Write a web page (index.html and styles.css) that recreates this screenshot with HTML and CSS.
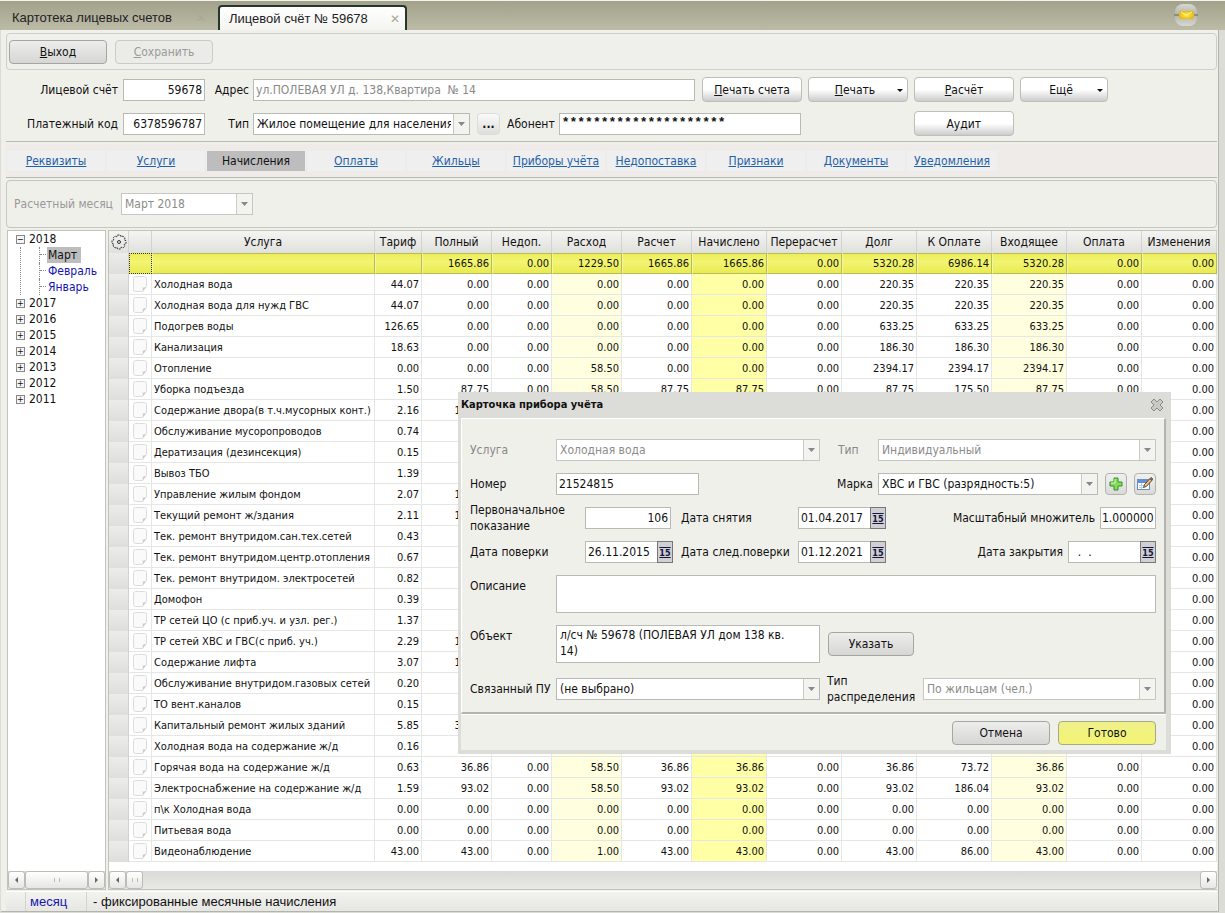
FILE: index.html
```html
<!DOCTYPE html>
<html lang="ru">
<head>
    <meta charset="UTF-8">
    <meta name="viewport" content="width=device-width, initial-scale=1.0">
    <title>Лицевой счёт № 59678</title>
    <link rel="stylesheet" href="styles.css">
</head>
<body>
    <header class="tabbar">
        <a href="#" class="tab">Картотека лицевых счетов <span class="tab-close">✕</span></a>
        <a href="#" class="tab tab-active">Лицевой счёт № 59678 <span class="tab-close">✕</span></a>
        <button type="button" class="mail" aria-label="Сообщения">
            <svg width="26" height="22" viewBox="0 0 26 22">
                <defs>
                    <linearGradient id="ball" x1="0" y1="0" x2="0" y2="1">
                        <stop offset="0" stop-color="#d6d6d2"/>
                        <stop offset="0.5" stop-color="#b4b4ae"/>
                        <stop offset="1" stop-color="#d8d8d4"/>
                    </linearGradient>
                    <radialGradient id="letter">
                        <stop offset="0" stop-color="#fff04a"/>
                        <stop offset="1" stop-color="#e8b818"/>
                    </radialGradient>
                </defs>
                <rect x="2" y="0" width="22" height="22" rx="8" fill="url(#ball)"/>
                <path d="M1 11h24" stroke="#8d8d80" stroke-width="2"/>
                <rect x="6" y="7" width="15" height="8" rx="2" fill="url(#letter)"/>
                <path d="M8 8l5 3 6-3" fill="none" stroke="#fff68c"/>
            </svg>
        </button>
    </header>

    <div class="window">
        <div class="toolbar">
            <button type="button" class="btn btn-gray"><u>В</u>ыход</button>
            <button type="button" class="btn btn-gray" disabled><u>С</u>охранить</button>
        </div>

        <form class="account">
            <div class="account-row">
                <label class="w-first" for="account">Лицевой счёт</label>
                <input class="field w-code num" id="account" type="text" value="59678">
                <label class="w-second" for="address">Адрес</label>
                <input class="field w-address muted" id="address" type="text" value="ул.ПОЛЕВАЯ УЛ д. 138,Квартира  № 14" readonly>
                <div class="actions">
                    <button type="button" class="btn"><u>П</u>ечать счета</button>
                    <button type="button" class="btn btn-menu"><u>П</u>ечать</button>
                    <button type="button" class="btn"><u>Р</u>асчёт</button>
                    <button type="button" class="btn btn-menu btn-more">Ещё</button>
                </div>
            </div>
            <div class="account-row">
                <label class="w-first" for="paycode">Платежный код</label>
                <input class="field w-code num" id="paycode" type="text" value="6378596787">
                <label class="w-second" for="kind">Тип</label>
                <select class="field w-kind" id="kind"><option>Жилое помещение для населения</option></select>
                <button type="button" class="btn btn-dots">...</button>
                <label for="owner">Абонент</label>
                <input class="field w-owner stars" id="owner" type="text" value="*********************">
                <button type="button" class="btn btn-audit">Аудит</button>
            </div>
        </form>

        <nav class="sections">
            <a href="#">Реквизиты</a>
            <a href="#">Услуги</a>
            <a href="#" class="current">Начисления</a>
            <a href="#">Оплаты</a>
            <a href="#">Жильцы</a>
            <a href="#">Приборы учёта</a>
            <a href="#">Недопоставка</a>
            <a href="#">Признаки</a>
            <a href="#">Документы</a>
            <a href="#">Уведомления</a>
        </nav>

        <div class="filter">
            <label for="month">Расчетный месяц</label>
            <select class="field w-month" id="month" disabled><option>Март 2018</option></select>
        </div>

        <main class="content">
            <aside class="tree-panel">
                <ul class="tree">
                    <li><button type="button" class="toggle">−</button>2018
                        <ul>
                            <li><a href="#" class="selected">Март</a></li>
                            <li><a href="#">Февраль</a></li>
                            <li><a href="#">Январь</a></li>
                        </ul>
                    </li>
                    <li><button type="button" class="toggle">+</button>2017</li>
                    <li><button type="button" class="toggle">+</button>2016</li>
                    <li><button type="button" class="toggle">+</button>2015</li>
                    <li><button type="button" class="toggle">+</button>2014</li>
                    <li><button type="button" class="toggle">+</button>2013</li>
                    <li><button type="button" class="toggle">+</button>2012</li>
                    <li><button type="button" class="toggle">+</button>2011</li>
                </ul>
                <div class="scroll">
                    <button type="button" class="scroll-btn left" aria-label="Влево"></button>
                    <span class="thumb thumb-wide"></span>
                    <button type="button" class="scroll-btn right" aria-label="Вправо"></button>
                </div>
            </aside>

            <section class="grid-panel">
                <table class="grid">
                    <colgroup>
                        <col class="c-mark"><col class="c-note"><col><col class="c-rate">
                        <col class="c-mid"><col class="c-small"><col class="c-mid"><col class="c-mid">
                        <col class="c-sum"><col class="c-sum"><col class="c-sum"><col class="c-sum">
                        <col class="c-sum"><col class="c-sum"><col class="c-sum">
                    </colgroup>
                    <thead>
                        <tr>
                            <th>
                                <svg class="gear" width="16" height="16" viewBox="0 0 16 16" fill="none" stroke="#333">
                                    <path stroke-dasharray="2 1" d="M6.5 1h3l.6 1.8 1.9-.7 2 2-.8 1.8 1.8.7v2.9l-1.8.7.8 1.8-2 2-1.9-.8-.6 1.8h-3l-.6-1.8-1.9.8-2-2 .8-1.8L1 9.500V6.600l1.800-.7L2 4.100l2-2 1.900.7z"/>
                                    <circle cx="8" cy="8" r="1.500"/>
                                </svg>
                            </th>
                            <th></th>
                            <th>Услуга</th>
                            <th>Тариф</th>
                            <th>Полный</th>
                            <th>Недоп.</th>
                            <th>Расход</th>
                            <th>Расчет</th>
                            <th>Начислено</th>
                            <th>Перерасчет</th>
                            <th>Долг</th>
                            <th>К Оплате</th>
                            <th>Входящее</th>
                            <th>Оплата</th>
                            <th>Изменения</th>
                        </tr>
                    </thead>
                    <tbody id="rows">
                        <tr class="total">
                            <td class="mark"></td><td class="focus"></td><td></td><td></td>
                            <td>1665.86</td><td>0.00</td><td>1229.50</td><td>1665.86</td><td>1665.86</td><td>0.00</td>
                            <td>5320.28</td><td>6986.14</td><td>5320.28</td><td>0.00</td><td>0.00</td>
                        </tr>
                    </tbody>
                </table>
                <div class="scroll">
                    <button type="button" class="scroll-btn left" aria-label="Влево"></button>
                    <span class="thumb"></span>
                    <button type="button" class="scroll-btn right push" aria-label="Вправо"></button>
                </div>
            </section>
        </main>

        <footer class="status">
            <span class="status-month">месяц</span>
            <span>- фиксированные месячные начисления</span>
        </footer>
    </div>

    <form class="dialog" role="dialog" aria-labelledby="dialogTitle">
        <div class="dialog-head">
            <h1 id="dialogTitle">Карточка прибора учёта</h1>
            <button type="button" class="dialog-close" aria-label="Закрыть">
                <svg width="14" height="14" viewBox="0 0 14 14">
                    <path d="M4 1L7 4l3-3 3 3-3 3 3 3-3 3-3-3-3 3-3-3 3-3-3-3z" fill="#c9c9c6" stroke="#8a8a88"/>
                </svg>
            </button>
        </div>
        <div class="dialog-body">
            <div class="line">
                <label class="d-label muted" for="service">Услуга</label>
                <select class="field d-wide" id="service" disabled><option>Холодная вода</option></select>
                <label class="d-type muted" for="type">Тип</label>
                <select class="field grow" id="type" disabled><option>Индивидуальный</option></select>
            </div>
            <div class="line">
                <label class="d-label" for="number">Номер</label>
                <input class="field d-number" id="number" type="text" value="21524815">
                <label class="push" for="brand">Марка</label>
                <select class="field d-brand" id="brand"><option>ХВС и ГВС (разрядность:5)</option></select>
                <button type="button" class="icon-btn" aria-label="Добавить">
                    <svg width="14" height="14" viewBox="0 0 14 14">
                        <path d="M5 1h4v4h4v4H9v4H5V9H1V5h4z" fill="#7fe05a" stroke="#3c8c2a"/>
                        <path d="M6 2v4H2" fill="none" stroke="#d2f8bc"/>
                    </svg>
                </button>
                <button type="button" class="icon-btn" aria-label="Изменить">
                    <svg width="16" height="16" viewBox="0 0 16 16">
                        <rect x="0.500" y="3.500" width="12" height="10" fill="#fff" stroke="#6d8fc0"/>
                        <path d="M1 4h11v3H1z" fill="#5f8fd8"/>
                        <path d="M2 9.500h6M2 11.500h4M4.500 7v6" stroke="#bfd0e8"/>
                        <path d="M6.500 11.500l1-3L13 2.500l2 1.800-5.500 6z" fill="#f0c070" stroke="#54453a"/>
                        <path d="M13 2.500l1-1 2 1.800-1 1z" fill="#d07a7a" stroke="#54453a"/>
                    </svg>
                </button>
            </div>
            <div class="line">
                <label class="d-label d-label-long" for="initial">Первоначальное показание</label>
                <input class="field d-initial num" id="initial" type="text" value="106">
                <label class="d-date-label" for="removed">Дата снятия</label>
                <span class="date"><input class="field" id="removed" type="text" value="01.04.2017"><button type="button" class="cal">15</button></span>
                <label class="push" for="scale">Масштабный множитель</label>
                <input class="field d-scale" id="scale" type="text" value="1.000000">
            </div>
            <div class="line">
                <label class="d-label d-label-long" for="checked">Дата поверки</label>
                <span class="date"><input class="field" id="checked" type="text" value="26.11.2015"><button type="button" class="cal">15</button></span>
                <label class="d-date-label" for="next">Дата след.поверки</label>
                <span class="date"><input class="field" id="next" type="text" value="01.12.2021"><button type="button" class="cal">15</button></span>
                <label class="push" for="closed">Дата закрытия</label>
                <span class="date"><input class="field" id="closed" type="text" value="  .  ."><button type="button" class="cal">15</button></span>
            </div>
            <div class="line line-top">
                <label class="d-label" for="about">Описание</label>
                <textarea class="field grow" id="about"></textarea>
            </div>
            <div class="line line-top">
                <label class="d-label" for="object">Объект</label>
                <textarea class="field d-wide" id="object">л/сч № 59678 (ПОЛЕВАЯ УЛ дом 138 кв. 14)</textarea>
                <button type="button" class="btn btn-gray btn-set">Указать</button>
            </div>
            <div class="line line-last">
                <label class="d-label" for="linked">Связанный ПУ</label>
                <select class="field d-wide" id="linked"><option>(не выбрано)</option></select>
                <label class="d-split" for="split">Тип распределения</label>
                <select class="field grow" id="split" disabled><option>По жильцам (чел.)</option></select>
            </div>
        </div>
        <div class="dialog-foot">
            <button type="button" class="btn btn-gray">Отмена</button>
            <button type="submit" class="btn btn-ok">Готово</button>
        </div>
    </form>

    <script src="script.js"></script>
</body>
</html>
```
FILE: styles.css
```css
* {
    box-sizing: border-box;
}
body {
    margin: 0;
    min-height: 100vh;
    display: flex;
    flex-direction: column;
    position: relative;
    background-color: #dcdcd7;
    color: #111;
    font-family: "DejaVu Sans Condensed", "DejaVu Sans", sans-serif;
    font-size: 12px;
    line-height: 16px;
}
input, select, textarea, button {
    font: inherit;
    color: inherit;
    margin: 0;
}
.push {
    margin-left: auto;
}
.grow {
    flex: 1;
    min-width: 0;
}
.muted {
    color: #888;
}

/* tabs */
.tabbar {
    display: flex;
    align-items: flex-end;
    height: 30px;
    border-top: 1px solid #f4f4ee;
    background: linear-gradient(#a2a28b, #bcbba7);
    font-family: "Liberation Sans", Arial, sans-serif;
    font-size: 13px;
}
.tab {
    display: flex;
    justify-content: space-between;
    align-items: center;
    width: 218px;
    height: 25px;
    padding: 0 12px;
    color: #222;
    text-decoration: none;
}
.tab-close {
    color: #aaa998;
    font-size: 12px;
}
.tab-active {
    width: 189px;
    padding: 0 5px 0 9px;
    border: 2px solid #26362c;
    border-bottom: none;
    border-radius: 4px 4px 0 0;
    background: linear-gradient(#fff, #f4f4f0);
}
.mail {
    margin: 0 26px 4px auto;
    padding: 0;
    height: 22px;
    border: none;
    background: none;
}

.window {
    flex: 1;
    display: flex;
    flex-direction: column;
    margin: 0 6px 1px 1px;
    padding: 3px 1px 0 5px;
    border-right: 1px solid #b4b4ae;
    border-bottom: 1px solid #b4b4ae;
    background-color: #f0f0eb;
}

/* buttons */
.btn {
    width: 100px;
    height: 25px;
    padding: 0;
    border: 1px solid #bdbdb9;
    border-radius: 4px;
    background: linear-gradient(#fff 50%, #ccc);
}
.btn-gray {
    width: 98px;
    height: 24px;
    border-color: #a5a5a2;
    background: linear-gradient(#ededeb, #d6d6d5);
}
.btn:disabled {
    color: #9a9a98;
    border-color: #cacac6;
    background: #ebebe8;
}
.btn-menu {
    padding-left: 4px;
}
.btn-menu::after {
    content: "";
    float: right;
    margin: 7px 4px 0 0;
    border: 3px solid transparent;
    border-top-color: #111;
}
.btn-more {
    width: 88px;
}
.btn-dots {
    width: 23px;
    height: 22px;
    margin: 0 7px;
    border-color: #dcdcd9;
    background: linear-gradient(#fafafa, #dededd);
    font-weight: bold;
}
.btn-ok {
    width: 98px;
    height: 24px;
    border-color: #a8a98a;
    background: linear-gradient(#eef08a, #f3f472);
}

/* text boxes and lists */
.field {
    height: 22px;
    padding: 0 2px;
    border: 1px solid #b9bab4;
    border-radius: 0;
    background-color: #fff;
    outline: none;
}
.num {
    text-align: right;
}
select.field {
    appearance: none;
    padding: 0 18px 0 3px;
    background: #fff url("data:image/svg+xml,%3Csvg xmlns='http://www.w3.org/2000/svg' width='16' height='20'%3E%3Cpath d='M0 0h16v20H0z' fill='%23f3f3f0'/%3E%3Cpath d='M.5 0v20' stroke='%23cbcbc6'/%3E%3Cpath d='M5 8h7l-3.500 4z' fill='%23888'/%3E%3C/svg%3E") right top no-repeat;
}
.field:disabled {
    color: #8c8c8a;
    border-color: #c6c6c2;
    opacity: 1;
}
textarea.field {
    height: 38px;
    padding: 1px 16px 1px 3px;
    resize: none;
    overflow: hidden;
}

.toolbar {
    display: flex;
    gap: 8px;
    height: 37px;
    padding: 6px 2px;
    border: 1px solid #cfcfca;
    border-radius: 4px;
    background-color: #efefec;
}

/* account header */
.account {
    display: flex;
    flex-direction: column;
    gap: 9px;
    padding: 7px 0 5px;
    border-bottom: 1px solid #b9b9b4;
}
.account-row {
    display: flex;
    align-items: center;
    height: 25px;
}
.w-first {
    width: 112px;
    text-align: right;
}
.w-code {
    width: 82px;
    margin-left: 5px;
}
.w-second {
    width: 44px;
    margin-right: 4px;
    text-align: right;
}
.w-address {
    width: 442px;
    white-space: pre;
}
.w-kind {
    width: 217px;
}
.w-owner {
    width: 242px;
    margin-left: 4px;
}
.stars {
    padding-bottom: 2px;
    font-family: "Liberation Mono", monospace;
    font-size: 13px;
    font-weight: bold;
}
.actions {
    display: flex;
    gap: 6px;
    margin-left: 7px;
}
.btn-audit {
    margin-left: 113px;
}

.sections {
    display: flex;
    gap: 2px;
    margin-top: 2px;
    padding: 7px 1px 6px;
    border-bottom: 1px solid #b9b9b4;
    background-color: #eeebe8;
}
.sections a {
    width: 98px;
    padding: 2px 0;
    background-color: #efeff0;
    color: #1f62a8;
    text-align: center;
    white-space: nowrap;
}
.sections a:last-child {
    width: 90px;
}
.sections a.current {
    background-color: #bdbdbe;
    color: #111;
    text-decoration: none;
}

.filter {
    display: flex;
    align-items: center;
    gap: 8px;
    height: 48px;
    margin: 2px 0;
    padding: 0 7px;
    border: 1px solid #c6c6c1;
    border-radius: 4px;
    color: #999;
}
.w-month {
    width: 132px;
}

/* months tree */
.content {
    flex: 1;
    display: flex;
    gap: 2px;
}
.tree-panel {
    display: flex;
    flex-direction: column;
    width: 99px;
    margin-left: 1px;
    border: 1px solid #c3c3be;
    background-color: #fff;
}
.tree {
    flex: 1;
}
.tree, .tree ul {
    margin: 0;
    padding: 0;
    list-style: none;
}
.tree li {
    padding-left: 8px;
}
.tree ul {
    margin-left: 4px;
    padding-left: 18px;
    border-left: 1px dotted #888;
}
.tree ul li {
    padding-left: 0;
    border-left: 1px dotted #888;
}
.tree ul li::before {
    content: "";
    display: inline-block;
    width: 6px;
    margin-right: 1px;
    border-top: 1px dotted #888;
    vertical-align: 4px;
}
.tree a {
    display: inline-block;
    color: #1515b0;
    padding: 0 1px;
    text-decoration: none;
}
.tree a.selected {
    padding: 0 4px 0 1px;
    background-color: #bdbdbd;
    color: #111;
}
.toggle {
    width: 9px;
    height: 9px;
    margin-right: 4px;
    padding: 0;
    border: 1px solid #888;
    background-color: #f4f4f4;
    font-size: 9px;
    line-height: 7px;
    vertical-align: 1px;
}

.scroll {
    display: flex;
    height: 18px;
    background: linear-gradient(#dadad8, #e8e8e4);
}
.scroll-btn, .thumb {
    display: flex;
    justify-content: center;
    align-items: center;
    width: 17px;
    padding: 0;
    border: 1px solid #bcbcb8;
    border-radius: 3px;
    background: linear-gradient(#fff, #e6e6e4);
}
.scroll-btn::before {
    content: "";
    border: 3px solid transparent;
}
.scroll-btn.left::before {
    margin-right: 3px;
    border-right-color: #666;
}
.scroll-btn.right::before {
    margin-left: 3px;
    border-left-color: #666;
}
.thumb::before {
    content: "";
    width: 4px;
    height: 4px;
    border: 1px solid #bbb;
    border-width: 0 1px;
}
.thumb-wide {
    flex: 1;
}

/* charges grid */
.grid-panel {
    flex: 1;
    min-width: 0;
    display: flex;
    flex-direction: column;
    justify-content: space-between;
    border: 1px solid #c3c3be;
    border-right: none;
    background-color: #fff;
}
.grid {
    width: 100%;
    table-layout: fixed;
    border-collapse: separate;
    border-spacing: 0;
    font-size: 11px;
}
.c-mark { width: 20px; }
.c-note { width: 23px; }
.c-rate { width: 47px; }
.c-small { width: 60px; }
.c-mid { width: 70px; }
.c-sum { width: 75px; }
.grid th {
    height: 22px;
    padding: 0;
    border-right: 1px solid #d2d2d0;
    background: linear-gradient(#f4f4f2, #e0e0dd);
    font-size: 12px;
    font-weight: normal;
    white-space: nowrap;
}
.grid td {
    height: 21px;
    padding: 1px 2px 0;
    border-right: 1px solid #e6e6e4;
    border-bottom: 1px solid #e6e6e4;
    text-align: right;
    white-space: nowrap;
}
.grid td:nth-child(3) {
    text-align: left;
}
.grid td.note {
    padding: 0 4px;
}
.grid td.note svg, .gear {
    display: block;
    margin: 0 auto;
}
.grid td:nth-child(7), .grid td:nth-child(13) {
    background-color: #ffffdf;
}
.grid td:nth-child(9) {
    background-color: #ffffa5;
}
.grid .total td {
    border: 1px solid #b9ba5c;
    border-left-color: #f4f5a0;
    background: linear-gradient(#ecee55, #f2f474 40%, #e9eb50);
}
.grid td.mark, .grid .total td.mark {
    border: none;
    border-right: 1px solid #d2d2d0;
    background: linear-gradient(#ececea, #dededc);
}
.grid .total td.focus {
    border: 1px dotted #333;
}

.status {
    display: flex;
    height: 20px;
    margin-top: 1px;
    padding-left: 19px;
    border-top: 1px solid #fff;
    background: linear-gradient(#f2f2ee, #e6e6e2);
    font-family: "Liberation Sans", Arial, sans-serif;
    font-size: 13px;
    line-height: 20px;
}
.status-month {
    width: 62px;
    margin-right: 6px;
    padding-left: 4px;
    border-left: 1px solid #d4d4cf;
    border-right: 1px solid #d4d4cf;
    color: #1515b0;
}

/* meter card */
.dialog {
    position: absolute;
    left: 458px;
    top: 392px;
    width: 713px;
    padding: 0 5px 4px 3px;
    background-color: #dcdcd9;
}
.dialog-head {
    display: flex;
    justify-content: space-between;
    align-items: center;
    height: 26px;
}
.dialog-head h1 {
    margin: 0;
    font-size: 11px;
}
.dialog-close {
    height: 14px;
    padding: 0;
    margin-right: 2px;
    border: none;
    background: none;
}
.dialog-body {
    padding: 20px 8px 12px 8px;
    display: flex;
    flex-direction: column;
    gap: 12px;
    border: 1px solid #fff;
    border-right: 2px solid #b4b4b0;
    border-bottom: 2px solid #b4b4b0;
    background-color: #f0f0eb;
}
.line {
    display: flex;
    align-items: center;
    min-height: 22px;
}
.line label {
    flex-shrink: 0;
}
.line .push {
    margin-right: 5px;
}
.line-top {
    align-items: flex-start;
}
.line-top label {
    padding-top: 3px;
}
.line-last {
    margin-top: 3px;
}
.d-label {
    width: 86px;
    white-space: nowrap;
}
.d-label-long {
    width: 115px;
    margin: -5px 0;
    white-space: normal;
}
.d-wide {
    width: 264px;
}
.d-type {
    width: 58px;
    padding-left: 18px;
}
.d-number {
    width: 143px;
}
.d-brand {
    width: 220px;
}
.d-initial {
    width: 86px;
    margin-right: 2px;
}
.d-date-label {
    width: 125px;
    padding-left: 8px;
}
.d-scale {
    width: 56px;
    padding: 0 1px;
}
.d-split {
    width: 103px;
    margin: -5px 0;
    padding-left: 7px;
}
.date {
    display: flex;
    width: 88px;
}
.date .field {
    width: 72px;
    border-right: none;
    white-space: pre;
}
.cal {
    width: 16px;
    height: 22px;
    padding: 2px 0 0;
    border: 1px solid #777;
    background-color: #d0d0d4;
    color: #14143c;
    font-size: 9px;
    font-weight: bold;
    text-decoration: underline overline;
}
.icon-btn {
    display: flex;
    align-items: center;
    justify-content: center;
    width: 22px;
    height: 22px;
    margin-left: 7px;
    padding: 0;
    border: 1px solid #b2b2b0;
    border-radius: 4px;
    background: linear-gradient(#f0f0ee, #dadad8);
}
.btn-set {
    align-self: center;
    width: 86px;
    margin-left: 8px;
}
.dialog-foot {
    display: flex;
    justify-content: flex-end;
    gap: 8px;
    padding: 6px 10px 5px;
    border-top: 1px solid #fff;
    background-color: #f0f0eb;
}
```
FILE: script.js
```js
// услуга, тариф, полный, расход, долг
const services = [
    ["Холодная вода", 44.07, 0, 0, 220.35],
    ["Холодная вода для нужд ГВС", 44.07, 0, 0, 220.35],
    ["Подогрев воды", 126.65, 0, 0, 633.25],
    ["Канализация", 18.63, 0, 0, 186.3],
    ["Отопление", 0, 0, 58.5, 2394.17],
    ["Уборка подъезда", 1.5, 87.75, 58.5, 87.75],
    ["Содержание двора(в т.ч.мусорных конт.)", 2.16, 126.36, 58.5, 126.36],
    ["Обслуживание мусоропроводов", 0.74, 43.29, 58.5, 43.29],
    ["Дератизация (дезинсекция)", 0.15, 8.78, 58.5, 8.78],
    ["Вывоз ТБО", 1.39, 81.32, 58.5, 81.32],
    ["Управление жилым фондом", 2.07, 121.1, 58.5, 121.1],
    ["Текущий ремонт ж/здания", 2.11, 123.44, 58.5, 123.44],
    ["Тек. ремонт внутридом.сан.тех.сетей", 0.43, 25.16, 58.5, 25.16],
    ["Тек. ремонт внутридом.центр.отопления", 0.67, 39.2, 58.5, 39.2],
    ["Тек. ремонт внутридом. электросетей", 0.82, 47.97, 58.5, 47.97],
    ["Домофон", 0.39, 22.82, 58.5, 22.82],
    ["ТР сетей ЦО (с приб.уч. и узл. рег.)", 1.37, 80.15, 58.5, 80.15],
    ["ТР сетей ХВС и ГВС(с приб. уч.)", 2.29, 133.97, 58.5, 133.97],
    ["Содержание лифта", 3.07, 179.6, 58.5, 179.6],
    ["Обслуживание внутридом.газовых сетей", 0.2, 11.7, 58.5, 11.7],
    ["ТО вент.каналов", 0.15, 8.78, 58.5, 8.78],
    ["Капитальный ремонт жилых зданий", 5.85, 342.23, 58.5, 342.23],
    ["Холодная вода на содержание ж/д", 0.16, 9.36, 58.5, 9.36],
    ["Горячая вода на содержание ж/д", 0.63, 36.86, 58.5, 36.86],
    ["Электроснабжение на содержание ж/д", 1.59, 93.02, 58.5, 93.02],
    ["п\\к Холодная вода", 0, 0, 0, 0],
    ["Питьевая вода", 0, 0, 0, 0],
    ["Видеонаблюдение", 43, 43, 1, 43]
];

const noteIcon = `
    <svg width="14" height="16" viewBox="0 0 14 16">
        <path d="M.5 2.500q0-2 2-2h9q2 0 2 2v8l-4 5h-7q-2 0-2-2z" fill="#fafafa" stroke="#dcdcda"/>
        <path d="M13.500 10.500l-4 5q1-3 0-4 2 .5 4-1z" fill="#c8c8c6"/>
    </svg>`;

const body = document.getElementById("rows");

services.forEach(([name, rate, full, usage, debt]) => {
    const sums = [rate, full, 0, usage, full, full, 0, debt, full + debt, debt, 0, 0];
    const row = document.createElement("tr");
    row.innerHTML = `<td class="mark"></td><td class="note">${noteIcon}</td><td>${name}</td>` +
        sums.map(sum => `<td>${sum.toFixed(2)}</td>`).join("");
    body.appendChild(row);
});
```
